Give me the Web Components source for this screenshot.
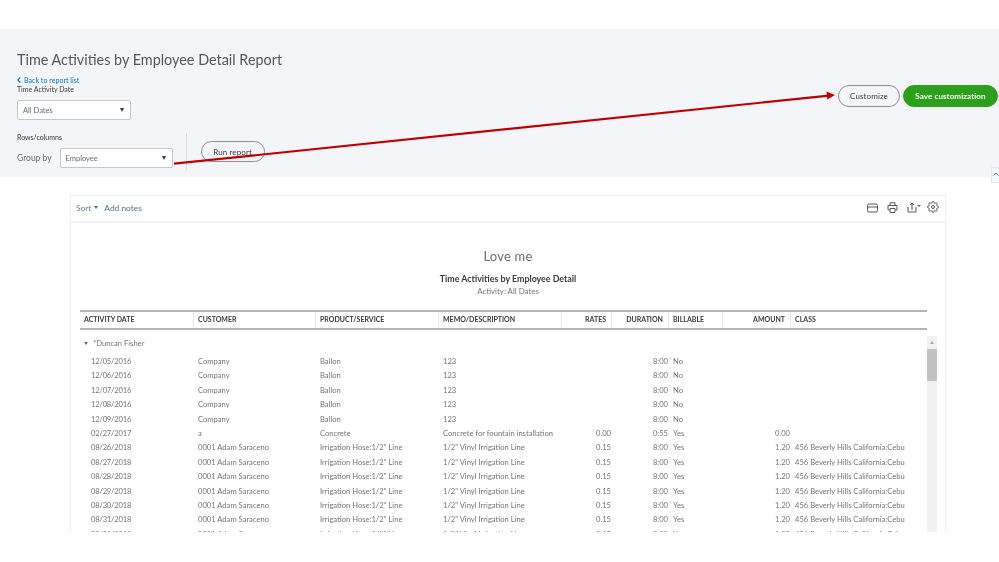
<!DOCTYPE html>
<html>
<head>
<meta charset="utf-8">
<title>Time Activities by Employee Detail Report</title>
<style>
  html, body { margin: 0; padding: 0; background: #fff; }
  body { font-family: "Lato", "Open Sans", sans-serif; color: #393a3d; width: 999px; height: 562px; overflow: hidden; position: relative; }
</style>
</head>
<body>
<time-report></time-report>

<script>
//SMALL SELECT BOX
class QbSelect extends HTMLElement {
  constructor() {
    super();
    this.attachShadow({ mode: "open" });
    this.shadowRoot.innerHTML = `
    <style>
      :host { display: flex; align-items: center; justify-content: space-between; box-sizing: border-box;
        background: #fff; border: 1px solid #c4c6cb; border-radius: 2px; padding: 0 6px 0 5px;
        font-size: 7.5px; color: #6b6c72; }
      i { width: 0; height: 0; border: 2.5px solid transparent; border-top: 4px solid #393a3d; border-bottom: 0; }
    </style>
    <slot></slot><i></i>`;
  }
}
customElements.define("qb-select", QbSelect);

//PILL BUTTON
class QbButton extends HTMLElement {
  constructor() {
    super();
    this.attachShadow({ mode: "open" });
    this.shadowRoot.innerHTML = `
    <style>
      :host { display: flex; align-items: center; justify-content: center; box-sizing: border-box; height: 22px;
        border: 1px solid #8d9096; border-radius: 11px; font-size: 8px; color: #393a3d; letter-spacing: .1px; }
      :host([primary]) { background: #2ca01c; border-color: #2ca01c; color: #fff; font-weight: 700; }
    </style>
    <slot></slot>`;
  }
}
customElements.define("qb-button", QbButton);

//GRAY BAND ON TOP
class ReportHeader extends HTMLElement {
  constructor() {
    super();
    this.attachShadow({ mode: "open" });
    this.shadowRoot.innerHTML = `
    <style>
      :host { display: flex; justify-content: space-between; box-sizing: border-box; height: 148px; margin-top: 29px;
        padding: 21px 1px 0 17px; background: #f4f5f8; }
      h1 { margin: 0; font-size: 14.4px; line-height: 20px; font-weight: 400; color: #55575c; }
      .back { display: flex; align-items: center; gap: 3px; margin-top: 6px; height: 8px; font-size: 7.1px; color: #0077c5; }
      .label { font-size: 7px; line-height: 9px; color: #393a3d; }
      .back + .label { margin-top: 1px; }
      .date { width: 114px; height: 20px; margin-top: 6px; }
      .rows { display: flex; margin-top: 13px; }
      .by { display: flex; align-items: center; gap: 8px; margin-top: 6px; font-size: 8.5px; color: #6b6c72; }
      .by qb-select { width: 113px; height: 20px; }
      .line { width: 1px; height: 37px; margin-left: 13px; background: #dcdde1; }
      .run { width: 64px; height: 21px; margin: 8px 0 0 14px; }
      .right { display: flex; gap: 3px; margin-top: 35px; }
      .right qb-button:first-child { width: 62px; }
      .right qb-button:last-child { width: 95px; }
    </style>
    <div>
      <h1>Time Activities by Employee Detail Report</h1>
      <div class="back"><svg width="4" height="6" viewBox="0 0 4 6"><path d="M3.4.4.8 3l2.6 2.6" fill="none" stroke="#0077c5" stroke-width="1.2"/></svg>Back to report list</div>
      <div class="label">Time Activity Date</div>
      <qb-select class="date">All Dates</qb-select>
      <div class="rows">
        <div class="group">
          <div class="label">Rows/columns</div>
          <div class="by">Group by <qb-select>Employee</qb-select></div>
        </div>
        <div class="line"></div>
        <qb-button class="run">Run report</qb-button>
      </div>
    </div>
    <div class="right">
      <qb-button>Customize</qb-button>
      <qb-button primary>Save customization</qb-button>
    </div>`;
  }
}
customElements.define("report-header", ReportHeader);

//THE ICONS OF THE TOOLBAR
class ReportTools extends HTMLElement {
  constructor() {
    super();
    this.attachShadow({ mode: "open" });
    this.shadowRoot.innerHTML = `
    <style>
      :host { display: flex; align-items: center; justify-content: space-between; box-sizing: border-box; height: 27px;
        padding: 0 6px 2px 5px; border-bottom: 2px solid #f1f3f8; font-size: 8.4px; color: #6b7f95; }
      .left { display: flex; align-items: center; gap: 6px; }
      .sort { display: flex; align-items: center; gap: 3px; }
      .sort i { width: 0; height: 0; border: 2.5px solid transparent; border-top: 3px solid #4a6a8c; border-bottom: 0; }
      .add { color: #52708f; }
      .icons { display: flex; align-items: center; }
      svg { display: block; fill: none; stroke: #55575c; stroke-width: 1; }
    </style>
    <div class="left"><span class="sort">Sort<i></i></span><span class="add">Add notes</span></div>
    <div class="icons">
      <svg width="11" height="10" viewBox="0 0 11 10" style="margin-right:9px"><rect x=".5" y="1" width="10" height="8" rx="1.5"/><path d="M.5 4h10"/></svg>
      <svg width="11" height="11" viewBox="0 0 11 11" style="margin-right:9px"><path d="M3 3V.8h5V3M2.5 8H1V3.5h9V8H8.5M3 6.5h5v4H3z"/></svg>
      <svg width="14" height="11" viewBox="0 0 14 11" style="margin-right:6px"><path d="M1 5v5h8V5M5 8V1M3 3l2-2 2 2"/><path d="M10 3h4l-2 2z" fill="#4a6a8c" stroke="none"/></svg>
      <svg width="12" height="12" viewBox="0 0 24 24" style="stroke-width:2;margin-top:-2px"><circle cx="12" cy="12" r="3"/><path d="M19.4 15a1.65 1.65 0 0 0 .33 1.82l.06.06a2 2 0 0 1 0 2.83 2 2 0 0 1-2.83 0l-.06-.06a1.65 1.65 0 0 0-1.82-.33 1.65 1.65 0 0 0-1 1.51V21a2 2 0 0 1-2 2 2 2 0 0 1-2-2v-.09A1.65 1.65 0 0 0 9 19.4a1.65 1.65 0 0 0-1.82.33l-.06.06a2 2 0 0 1-2.83 0 2 2 0 0 1 0-2.83l.06-.06a1.65 1.65 0 0 0 .33-1.82 1.65 1.65 0 0 0-1.51-1H3a2 2 0 0 1-2-2 2 2 0 0 1 2-2h.09A1.65 1.65 0 0 0 4.6 9a1.65 1.65 0 0 0-.33-1.82l-.06-.06a2 2 0 0 1 0-2.83 2 2 0 0 1 2.83 0l.06.06a1.65 1.65 0 0 0 1.82.33H9a1.65 1.65 0 0 0 1-1.51V3a2 2 0 0 1 2-2 2 2 0 0 1 2 2v.09a1.65 1.65 0 0 0 1 1.51 1.65 1.65 0 0 0 1.82-.33l.06-.06a2 2 0 0 1 2.83 0 2 2 0 0 1 0 2.83l-.06.06a1.65 1.65 0 0 0-.33 1.82V9a1.65 1.65 0 0 0 1.51 1H21a2 2 0 0 1 2 2 2 2 0 0 1-2 2h-.09a1.65 1.65 0 0 0-1.51 1z"/></svg>
    </div>`;
  }
}
customElements.define("report-tools", ReportTools);

//ONE LINE OF THE TABLE
const COLUMNS = "114px 122px 123px 123px 50px 57px 54px 68px 136px";
class ReportRow extends HTMLElement {
  constructor() {
    super();
    this.attachShadow({ mode: "open" });
    const cells = JSON.parse(this.getAttribute("cells"));
    this.shadowRoot.innerHTML = `
    <style>
      :host { display: grid; grid-template-columns: ${COLUMNS}; height: 14.4px; line-height: 14.4px; font-size: 7.6px; color: #737479; white-space: nowrap; }
      span { padding: 0 4px; overflow: hidden; }
      span:first-of-type { padding-left: 11px; letter-spacing: -.2px; }
      .r { text-align: right; padding: 0 1px 0 0; }
    </style>
    ${cells.map((c, i) => `<span class="${[4, 5, 7].includes(i) ? "r" : ""}">${c}</span>`).join("")}`;
  }
}
customElements.define("report-row", ReportRow);

//THE TABLE WITH ITS SCROLLBAR
class ReportTable extends HTMLElement {
  constructor() {
    super();
    this.attachShadow({ mode: "open" });
    const heads = ["ACTIVITY DATE", "CUSTOMER", "PRODUCT/SERVICE", "MEMO/DESCRIPTION", "RATES", "DURATION", "BILLABLE", "AMOUNT", "CLASS"];
    const hose = 'Irrigation Hose:1/2" Line', vinyl = '1/2" Vinyl Irrigation Line', where = "456 Beverly Hills California:Cebu";
    const rows = [];
    ["12/05/2016", "12/06/2016", "12/07/2016", "12/08/2016", "12/09/2016"].forEach(d => {
      rows.push([d, "Company", "Ballon", "123", "", "8:00", "No", "", ""]);
    });
    rows.push(["02/27/2017", "a", "Concrete", "Concrete for fountain installation", "0.00", "0:55", "Yes", "0.00", ""]);
    ["08/26/2018", "08/27/2018", "08/28/2018", "08/29/2018", "08/30/2018", "08/31/2018", "09/01/2018"].forEach(d => {
      rows.push([d, "0001 Adam Saraceno", hose, vinyl, "0.15", "8:00", "Yes", "1.20", where]);
    });
    const attr = r => JSON.stringify(r).replace(/"/g, "&quot;");
    this.shadowRoot.innerHTML = `
    <style>
      :host { display: block; margin: 0 8px 0 9px; }
      .head { display: grid; grid-template-columns: ${COLUMNS}; width: 847px; box-sizing: border-box; height: 20px; align-items: center;
        border-top: 2px solid #b4b5b7; border-bottom: 2px solid #b4b5b7; font-size: 7px; font-weight: 700; color: #393a3d; }
      .head span { height: 100%; display: flex; align-items: center; padding: 0 4px 3px; border-right: 1px solid #e6e7ea; box-sizing: border-box; }
      .head span.r { justify-content: flex-end; padding-right: 5px; }
      .head span:last-child { border: 0; }
      .body { display: flex; height: 196px; margin-top: 6px; }
      .rows { width: 847px; height: 196px; overflow: hidden; }
      .group { display: flex; align-items: center; gap: 4px; height: 14px; margin: 0 0 4px 4px; font-size: 7.6px; color: #737479; }
      .group i { width: 0; height: 0; border: 2.5px solid transparent; border-top: 3px solid #6b6c72; border-bottom: 0; margin-right: 1px; }
      .bar { width: 10px; background: #f1f1f1; position: relative; }
      .bar b { display: block; height: 32px; margin-top: 13px; background: #c1c1c1; }
      .bar i { position: absolute; left: 3px; top: 5px; width: 0; height: 0; border: 2px solid transparent; border-bottom: 3px solid #a3a3a3; border-top: 0; }
    </style>
    <div class="head">${heads.map((h, i) => `<span class="${[4, 5, 7].includes(i) ? "r" : ""}">${h}</span>`).join("")}</div>
    <div class="body">
      <div class="rows">
        <div class="group"><i></i>*Duncan Fisher</div>
        ${rows.map(r => `<report-row cells="${attr(r)}"></report-row>`).join("")}
      </div>
      <div class="bar"><i></i><b></b></div>
    </div>`;
  }
}
customElements.define("report-table", ReportTable);

//THE WHITE CARD
class ReportCard extends HTMLElement {
  constructor() {
    super();
    this.attachShadow({ mode: "open" });
    this.shadowRoot.innerHTML = `
    <style>
      :host { display: block; box-sizing: border-box; width: 876px; height: 337px; margin: 18px 0 0 70px;
        border: 1px solid #eef0f6; border-bottom: 0; overflow: hidden; background: #fff; }
      .titles { text-align: center; height: 87px; color: #393a3d; box-sizing: border-box; padding-top: 24px; }
      .co { font-size: 13px; line-height: 18px; color: #6b6c72; letter-spacing: .2px; }
      .name { font-size: 8.85px; font-weight: 700; line-height: 10px; margin-top: 9px; }
      .act { font-size: 7.9px; line-height: 10px; margin-top: 2px; color: #737479; }
    </style>
    <report-tools></report-tools>
    <div class="titles">
      <div class="co">Love me</div>
      <div class="name">Time Activities by Employee Detail</div>
      <div class="act">Activity: All Dates</div>
    </div>
    <report-table></report-table>`;
  }
}
customElements.define("report-card", ReportCard);

//THE WHOLE PAGE, ARROW LIES OVER EVERYTHING
class TimeReport extends HTMLElement {
  constructor() {
    super();
    this.attachShadow({ mode: "open" });
    this.shadowRoot.innerHTML = `
    <style>
      :host { display: block; overflow: hidden; height: 562px; filter: blur(.3px); }
      .arrow { position: absolute; left: 0; top: 0; pointer-events: none; }
      .tab { position: absolute; right: 0; top: 167px; width: 8px; height: 16px; background: #f4f7fb; border: 1px solid #e3e6ee; border-right: 0; box-sizing: border-box; }
      .tab svg { display: block; margin: 4px 0 0 1px; }
    </style>
    <report-header></report-header>
    <report-card></report-card>
    <div class="tab"><svg width="6" height="4" viewBox="0 0 6 4"><path d="M.5 3.5 3 1l2.5 2.5" fill="none" stroke="#3f66b5" stroke-width="1"/></svg></div>
    <svg class="arrow" width="999" height="562"><path d="M174 163.7 829 95.6" stroke="#c00000" stroke-width="2.2" fill="none"/><path d="M835 95 826.5 91.6 827.3 99.6z" fill="#c00000"/></svg>`;
  }
}
customElements.define("time-report", TimeReport);
</script>
</body>
</html>
